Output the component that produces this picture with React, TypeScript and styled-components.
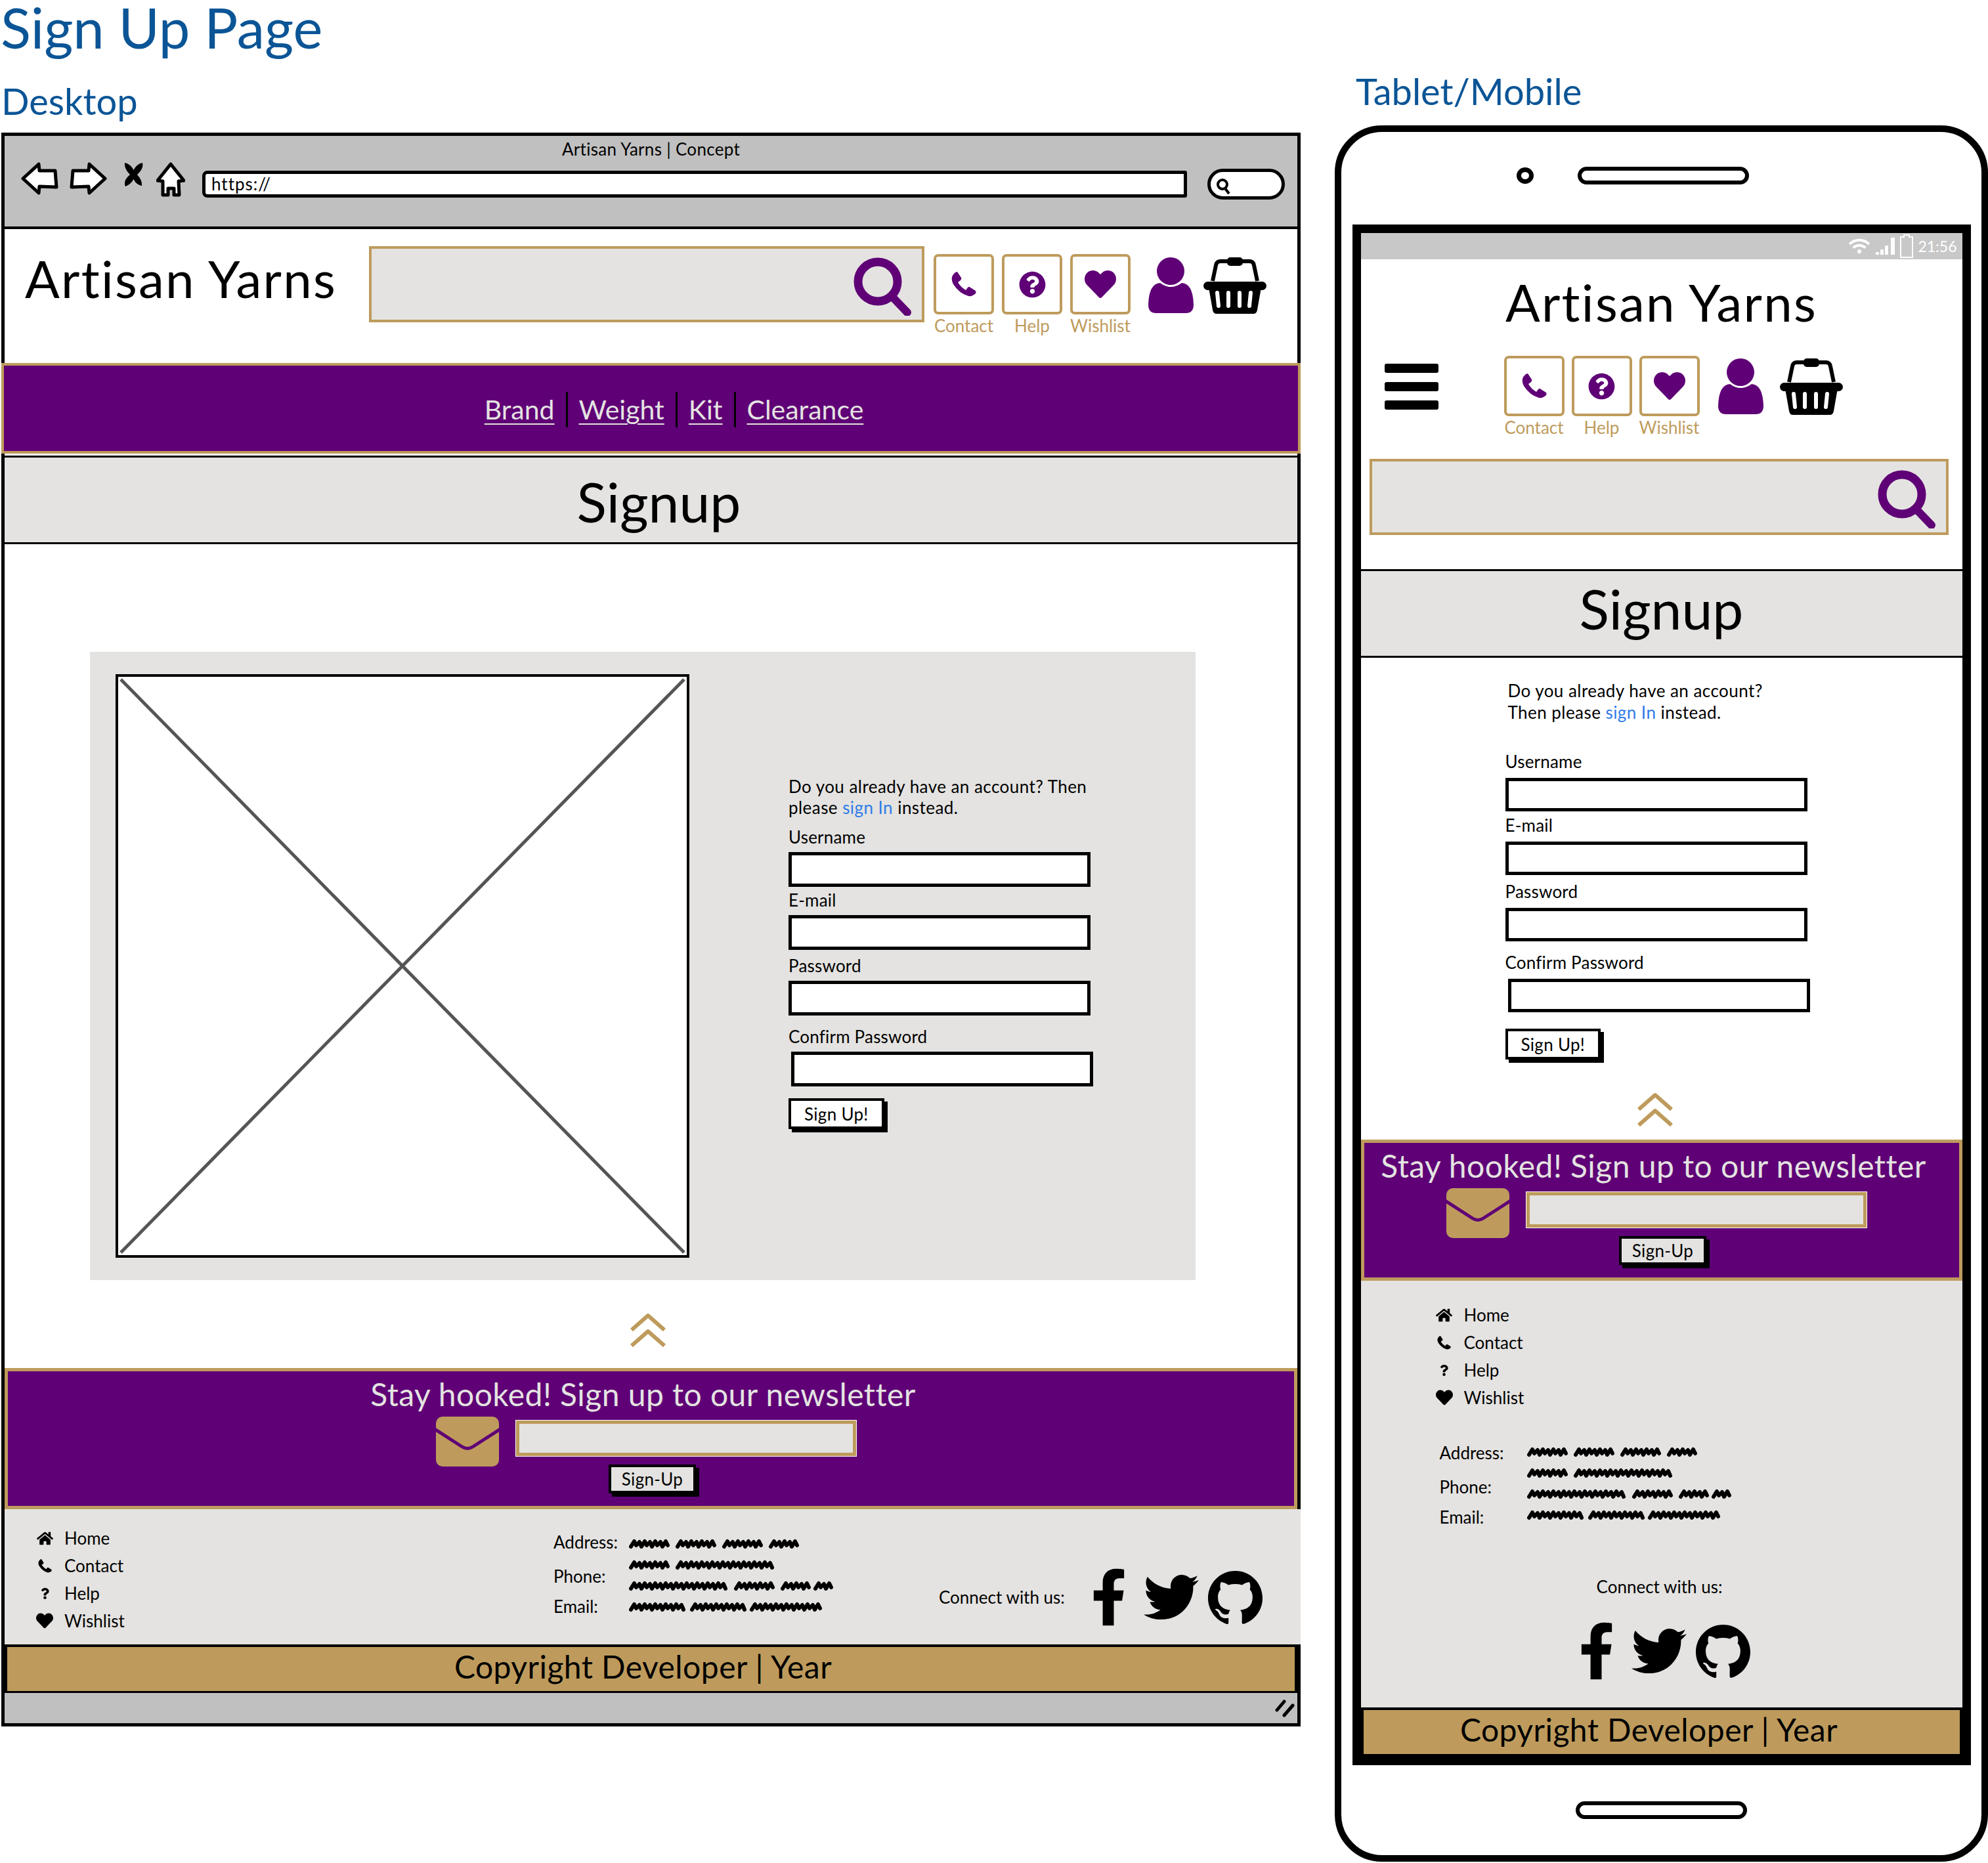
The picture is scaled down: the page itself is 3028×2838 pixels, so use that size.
import React from "react"
import styled, { createGlobalStyle } from "styled-components"
import { FaFacebookF, FaHeart, FaHome, FaQuestion, FaQuestionCircle, FaTwitter, FaWifi } from "react-icons/fa"
import { SiGithub } from "react-icons/si"

const Purple = "#5f0076"
const Tan = "#be9b5c"
const Paper = "#e4e3e1"
const Chrome = "#c0c0c0"
const Ink = "#000"
const Title = "#0b5596"

const GlobalStyle = createGlobalStyle`
  * { box-sizing: border-box; }
  html, body { margin: 0; padding: 0; background: #fff; }
  body { font-family: Lato, "Open Sans", sans-serif; color: ${Ink}; }
`

const Page = styled.div`
  width: 3028px;
  height: 2838px;
  display: flex;
  overflow: hidden;
`

const LeftColumn = styled.div`
  flex: 0 0 1985px;
`

const RightColumn = styled.div`
  flex: 0 0 995px;
  margin-left: 48px;
  padding-top: 107px;
`

const PageTitle = styled.h1`
  margin: 0;
  height: 122px;
  padding-left: 1px;
  font-size: 85px;
  font-weight: 400;
  line-height: 82px;
  color: ${Title};
`

const SectionTitle = styled.h2<{ $indent: number; $height: number }>`
  margin: 0;
  height: ${(p) => p.$height}px;
  padding-left: ${(p) => p.$indent}px;
  font-size: 56px;
  font-weight: 400;
  line-height: 64px;
  color: ${Title};
`

/* desktop browser frame */
const Browser = styled.div`
  margin-left: 2px;
  width: 1979px;
  height: 2428px;
  border: 5px solid ${Ink};
  display: flex;
  flex-direction: column;
`

const Toolbar = styled.div`
  flex: 0 0 142px;
  background: ${Chrome};
  border-bottom: 4px solid ${Ink};
`

const WindowTitle = styled.div`
  height: 40px;
  text-align: center;
  font-size: 26px;
  letter-spacing: 0.3px;
  line-height: 40px;
`

const ToolbarRow = styled.div`
  display: flex;
  align-items: flex-start;
  padding-left: 25px;
`

const NavGlyph = styled.svg<{ $gap: number }>`
  flex: none;
  margin-right: ${(p) => p.$gap}px;
`

const UrlBar = styled.div`
  width: 1500px;
  height: 41px;
  margin-top: 13px;
  padding-left: 9px;
  background: #fff;
  border: 5px solid ${Ink};
  border-radius: 8px 3px 3px 8px;
  font-size: 26px;
  letter-spacing: 1px;
  line-height: 31px;
`

const SearchPill = styled.div`
  width: 118px;
  height: 47px;
  margin: 10px 0 0 31px;
  padding: 9px 0 0 8px;
  background: #fff;
  border: 5px solid ${Ink};
  border-radius: 24px;
  display: flex;
`

const DesktopHeader = styled.div`
  flex: 0 0 204px;
  display: flex;
  align-items: flex-start;
  padding-top: 26px;
`

const Logo = styled.div`
  font-size: 78px;
  font-weight: 400;
  letter-spacing: 2.3px;
  line-height: 90px;
`

const DesktopLogo = styled(Logo)`
  flex: 0 0 555px;
  margin-top: 4px;
  padding-left: 31px;
`

const SearchBox = styled.div<{ $width: number }>`
  flex: none;
  width: ${(p) => p.$width}px;
  height: 116px;
  padding: 6px 16px 0 0;
  background: ${Paper};
  border: 4px solid ${Tan};
  display: flex;
  align-items: center;
  justify-content: flex-end;
`

const Shortcuts = styled.div<{ $gap: number }>`
  display: flex;
  align-items: flex-start;
  gap: ${(p) => p.$gap}px;
`

const DesktopShortcuts = styled(Shortcuts)`
  margin: 12px 0 0 14px;
`

const ShortcutItem = styled.div`
  width: 92px;
  display: flex;
  flex-direction: column;
  align-items: center;
`

const ShortcutBox = styled.div`
  width: 92px;
  height: 92px;
  background: #fff;
  border: 4px solid ${Tan};
  border-radius: 7px;
  display: flex;
  align-items: center;
  justify-content: center;
  color: ${Purple};
`

const ShortcutLabel = styled.div`
  margin-top: 1px;
  font-size: 26px;
  line-height: 32px;
  color: ${Tan};
`

const AccountIcons = styled.div<{ $left: number; $gap: number; $top: number }>`
  display: flex;
  align-items: flex-start;
  gap: ${(p) => p.$gap}px;
  margin-left: ${(p) => p.$left}px;
  margin-top: ${(p) => p.$top}px;
`

const NavBar = styled.div`
  flex: 0 0 138px;
  margin: 0 -5px 3px;
  padding: 4px 0 0 70px;
  background: ${Purple};
  border: 4px solid ${Tan};
  display: flex;
  align-items: center;
  justify-content: center;
`

const NavLink = styled.a`
  padding: 0 17px;
  font-size: 41px;
  line-height: 54px;
  color: ${Paper};
  text-decoration: underline;
  text-decoration-thickness: 2px;
  text-underline-offset: 6px;
  border-left: 3px solid ${Ink};

  &:first-child {
    border-left: 0;
  }
`

const PageHeading = styled.div<{ $mobile?: boolean }>`
  flex: 0 0 135px;
  min-height: 0;
  padding-left: ${(p) => (p.$mobile ? 0 : 24)}px;
  background: ${Paper};
  border-top: 3px solid ${Ink};
  border-bottom: 3px solid ${Ink};
  text-align: center;
  font-size: 84px;
  line-height: ${(p) => (p.$mobile ? 114 : 134)}px;
`

const DesktopContent = styled.div`
  flex: 0 0 1255px;
  display: flex;
  flex-direction: column;
  align-items: flex-start;
  padding-top: 164px;
`

const Panel = styled.div`
  margin-left: 130px;
  width: 1684px;
  height: 957px;
  padding: 34px 0 0 39px;
  background: ${Paper};
  display: flex;
  align-items: flex-start;
`

const Placeholder = styled.svg`
  flex: none;
  background: #fff;
  border: 4px solid ${Ink};
`

const Form = styled.form<{ $mobile?: boolean }>`
  width: 480px;
  display: flex;
  flex-direction: column;
  align-items: flex-start;
  margin: ${(p) => (p.$mobile ? "34px 0 0 220px" : "155px 0 0 151px")};
`

const Intro = styled.p<{ $mobile?: boolean }>`
  margin: 0;
  padding-left: ${(p) => (p.$mobile ? 4 : 0)}px;
  font-size: 26px;
  letter-spacing: 0.45px;
  line-height: ${(p) => (p.$mobile ? 33 : 32)}px;
  white-space: nowrap;
`

const SignInLink = styled.a`
  color: #2f7be8;
`

const Field = styled.label<{ $top: number; $inset?: number; $mobile?: boolean }>`
  display: block;
  margin-top: ${(p) => p.$top}px;
  font-size: 26px;
  letter-spacing: 0.2px;
  line-height: 32px;

  input {
    display: block;
    width: 460px;
    height: ${(p) => (p.$mobile ? 51 : 53)}px;
    margin: ${(p) => (p.$mobile ? 9 : 7)}px 0 0 ${(p) => p.$inset ?? 0}px;
    background: #fff;
    border: 5px solid ${Ink};
    outline: 0;
  }
`

const SketchButton = styled.button`
  height: 47px;
  padding: 0 20px;
  background: #fff;
  border: 4px solid ${Ink};
  box-shadow: 5px 5px 0 ${Ink};
  font-family: inherit;
  font-size: 26px;
  letter-spacing: 0.3px;
  line-height: 36px;
  color: ${Ink};
`

const SubmitButton = styled(SketchButton)<{ $top: number }>`
  margin-top: ${(p) => p.$top}px;
`

const BackToTop = styled.svg<{ $top: number; $left: number }>`
  flex: none;
  margin: ${(p) => p.$top}px 0 0 ${(p) => p.$left}px;
`

const Newsletter = styled.div`
  flex: 0 0 215px;
  background: ${Purple};
  border: 5px solid ${Tan};
  padding-top: 8px;
  display: flex;
  flex-direction: column;
  align-items: center;
`

const NewsletterTitle = styled.div`
  padding-right: 24px;
  font-size: 48px;
  letter-spacing: 0.45px;
  line-height: 54px;
  color: ${Paper};
`

const NewsletterRow = styled.div`
  margin-top: 7px;
  padding-right: 15px;
  display: flex;
  align-items: flex-start;
  gap: 26px;
`

const NewsletterInput = styled.input`
  width: 518px;
  height: 54px;
  margin-top: 6px;
  background: ${Paper};
  border: 5px solid ${Tan};
  box-shadow: 0 0 0 1px #fff;
  outline: 0;
`

const NewsletterButton = styled(SketchButton)`
  height: 44px;
  margin: -3px 0 0 4px;
  padding: 0 16px;
  background: ${Paper};
  line-height: 32px;
`

const FooterBar = styled.div<{ $stacked?: boolean }>`
  background: ${Paper};
  ${(p) =>
    p.$stacked
      ? `
    flex: 0 0 650px;
    display: flex;
    flex-direction: column;
    align-items: flex-start;
    padding: 31px 0 0 114px;
  `
      : `
    flex: 0 0 206px;
    margin-right: -5px;
    display: grid;
    grid-template-columns: 836px 587px 1fr;
  `}
`

const FooterLinks = styled.ul<{ $stacked?: boolean }>`
  list-style: none;
  margin: 0;
  padding: ${(p) => (p.$stacked ? 0 : "23px 0 0 48px")};
`

const FooterLink = styled.li`
  height: 42px;
  display: flex;
  align-items: center;
  font-size: 26px;
`

const LinkIcon = styled.span`
  flex: 0 0 43px;
  padding-right: 17px;
  display: flex;
  justify-content: center;
`

const Address = styled.div<{ $stacked?: boolean }>`
  display: flex;
  align-items: flex-start;
  padding: ${(p) => (p.$stacked ? "0 0 0 6px" : "36px 0 0 0")};
  margin-top: ${(p) => (p.$stacked ? 45 : 0)}px;
`

const AddressLabels = styled.div<{ $stacked?: boolean }>`
  flex: 0 0 ${(p) => (p.$stacked ? 133 : 115)}px;
  margin-top: ${(p) => (p.$stacked ? 2 : -2)}px;
`

const AddressLabel = styled.div<{ $top: number }>`
  margin-top: ${(p) => p.$top}px;
  font-size: 26px;
  line-height: 32px;
`

const AddressLines = styled.div`
  display: flex;
  flex-direction: column;
`

const ScribbleLine = styled.svg`
  display: block;
`

const Connect = styled.div<{ $stacked?: boolean }>`
  display: flex;
  font-size: 26px;
  ${(p) =>
    p.$stacked
      ? `
    flex-direction: column;
    align-items: center;
    gap: 38px;
    align-self: center;
    margin: 74px 0 0 -114px;
  `
      : `
    align-items: center;
    gap: 40px;
    padding-top: 90px;
    align-self: start;
  `}
`

const ConnectLabel = styled.span<{ $stacked?: boolean }>`
  padding-right: ${(p) => (p.$stacked ? 6 : 0)}px;
`

const SocialIcons = styled.div<{ $stacked?: boolean }>`
  display: flex;
  align-items: center;
  margin-left: ${(p) => (p.$stacked ? 10 : 0)}px;
`

const FacebookIcon = styled(FaFacebookF)`
  width: 54px;
  height: 88px;
  margin-right: 26px;
`

const TwitterIcon = styled(FaTwitter)`
  width: 84px;
  height: 84px;
  margin-right: 14px;
`

const GithubIcon = styled(SiGithub)`
  width: 83px;
  height: 83px;
`

const CopyrightBar = styled.div<{ $shift: number }>`
  flex: 0 0 75px;
  background: ${Tan};
  border: 4px solid ${Ink};
  padding-right: ${(p) => p.$shift}px;
  text-align: center;
  font-size: 48px;
  letter-spacing: 0.45px;
  line-height: 59px;
`

const StatusStrip = styled.div`
  flex: 1;
  margin-top: -1px;
  padding-right: 4px;
  background: ${Chrome};
  display: flex;
  align-items: center;
  justify-content: flex-end;
`

/* phone frame */
const Phone = styled.div`
  width: 995px;
  height: 2645px;
  border: 10px solid ${Ink};
  border-radius: 72px;
  display: flex;
  flex-direction: column;
  align-items: center;
`

const PhoneTop = styled.div`
  flex: 0 0 141px;
  padding: 0 88px 8px 0;
  display: flex;
  align-items: center;
  gap: 67px;
`

const Camera = styled.div`
  width: 26px;
  height: 25px;
  border: 7px solid ${Ink};
  border-radius: 50%;
`

const Speaker = styled.div`
  width: 261px;
  height: 27px;
  border: 6px solid ${Ink};
  border-radius: 14px;
`

const Screen = styled.div`
  flex: 0 0 2347px;
  width: 942px;
  border: 13px solid ${Ink};
  display: flex;
  flex-direction: column;
`

const PhoneStatus = styled.div`
  flex: 0 0 40px;
  padding-right: 8px;
  background: #c8c8c8;
  display: flex;
  align-items: center;
  justify-content: flex-end;
  gap: 7px;
  font-size: 23px;
  color: #fff;
`

const MobileHeader = styled.div`
  flex: 0 0 472px;
  display: flex;
  flex-direction: column;
`

const MobileLogo = styled(Logo)`
  margin-top: 20px;
  text-align: center;
`

const MobileTools = styled.div`
  margin-top: 37px;
  height: 118px;
  padding-left: 36px;
  display: flex;
  align-items: flex-start;
`

const Burger = styled.div`
  flex: 0 0 82px;
  margin: 12px 100px 0 0;
  display: flex;
  flex-direction: column;
  gap: 14px;
`

const BurgerBar = styled.span`
  height: 14px;
  background: ${Ink};
  border-radius: 3px;
`

const MobileSearch = styled(SearchBox)`
  margin: 39px 0 0 13px;
`

const MobileContent = styled.div`
  flex: 1;
  display: flex;
  flex-direction: column;
  align-items: flex-start;
`

const HomeKey = styled.div`
  flex: 1;
  display: flex;
  align-items: center;
`

const BackGlyph = ({ flip, gap }: { flip?: boolean; gap: number }) => (
  <NavGlyph $gap={gap} width="57" height="50" viewBox="0 0 57 50">
    <path
      transform={flip ? "translate(57 0) scale(-1 1)" : undefined}
      d="M3 25 L27 3 L28 13 H52 L54 38 L28 37 L27 47 Z"
      fill="#fff"
      stroke={Ink}
      strokeWidth="5"
      strokeLinejoin="round"
    />
  </NavGlyph>
)

const BrowserNav = () => (
  <>
    <BackGlyph gap={17} />
    <BackGlyph flip gap={24} />
    <NavGlyph $gap={18} width="33" height="38" viewBox="0 0 33 38">
      <path
        d="M3 1 Q12 3 16.5 12 Q21 3 30 1 Q32 10 22 19 Q30 28 29 36 Q20 34 16.5 26 Q12 34 4 37 Q0 28 11 19 Q2 10 3 1Z"
        fill={Ink}
      />
    </NavGlyph>
    <NavGlyph $gap={26} width="44" height="54" viewBox="0 0 44 54">
      <path
        d="M22 3 L42 28 L34 29 L35 50 L27 50 L27 40 L18 40 L18 50 L10 50 L10 29 L2 28 Z"
        fill="#fff"
        stroke={Ink}
        strokeWidth="5"
        strokeLinejoin="round"
      />
    </NavGlyph>
  </>
)

const MagnifierIcon = () => (
  <svg width="88" height="90" viewBox="0 0 88 90">
    <circle cx="37" cy="38" r="30" fill="none" stroke={Purple} strokeWidth="13" />
    <path d="M58 60 L82 85" stroke={Purple} strokeWidth="12" strokeLinecap="round" />
  </svg>
)

const PhoneGlyph = ({ size, color }: { size: number; color: string }) => (
  <svg width={size} height={size} viewBox="0 0 38 38">
    <path
      d="M9 0 L15 9 Q16 11 14 13 L10 16 Q14 23 22 28 L25 24 Q27 22 29 24 L37 29 Q38 31 37 33 Q32 38 26 37 Q12 33 3 19 Q-2 9 4 3 Q6 0 9 0Z"
      fill={color}
    />
  </svg>
)

const PersonIcon = () => (
  <svg width="69" height="85" viewBox="0 0 69 85">
    <circle cx="34" cy="21" r="21" fill={Purple} />
    <path d="M18 39 Q34 51 51 39 Q68 40 69 72 Q69 85 57 85 H12 Q0 85 0 72 Q1 40 18 39Z" fill={Purple} />
  </svg>
)

const BasketIcon = () => (
  <svg width="96" height="86" viewBox="0 0 96 86">
    <path d="M14 36 L19 12 Q20 6 26 6 H70 Q76 6 77 12 L82 36" fill="none" stroke={Ink} strokeWidth="6" />
    <rect x="36" y="0" width="24" height="13" rx="5" fill={Ink} />
    <rect x="0" y="37" width="96" height="13" rx="6.5" fill={Ink} />
    <path d="M8 46 H88 L82 80 Q81 86 76 86 H20 Q15 86 14 80Z" fill={Ink} />
    <path d="M21 54 L23 74 M38 54 V74 M55 54 V74 M72 54 L70 74" stroke="#fff" strokeWidth="6" strokeLinecap="round" />
  </svg>
)

const EnvelopeIcon = () => (
  <svg width="96" height="76" viewBox="0 0 96 76">
    <rect width="96" height="76" rx="10" fill={Tan} />
    <path d="M-2 19 L40 46 Q48 51 56 46 L98 19" fill="none" stroke={Purple} strokeWidth="5" />
  </svg>
)

const ChevronsIcon = ({ top, left }: { top: number; left: number }) => (
  <BackToTop $top={top} $left={left} width="56" height="53" viewBox="0 0 56 53">
    <path d="M3 26 L28 4 L53 26 M3 50 L28 28 L53 50" fill="none" stroke={Tan} strokeWidth="6" strokeLinejoin="round" />
  </BackToTop>
)

const ShortcutGroup = () => (
  <>
    <ShortcutItem>
      <ShortcutBox>
        <PhoneGlyph size={38} color={Purple} />
      </ShortcutBox>
      <ShortcutLabel>Contact</ShortcutLabel>
    </ShortcutItem>
    <ShortcutItem>
      <ShortcutBox>
        <FaQuestionCircle size={41} />
      </ShortcutBox>
      <ShortcutLabel>Help</ShortcutLabel>
    </ShortcutItem>
    <ShortcutItem>
      <ShortcutBox>
        <FaHeart size={48} />
      </ShortcutBox>
      <ShortcutLabel>Wishlist</ShortcutLabel>
    </ShortcutItem>
  </>
)

const SignupForm = ({ mobile }: { mobile?: boolean }) => {
  const gaps = mobile ? [42, 5, 9, 16] : [13, 4, 8, 16]
  return (
    <Form $mobile={mobile}>
      <Intro $mobile={mobile}>
        {mobile ? "Do you already have an account?" : "Do you already have an account? Then"}
        <br />
        {mobile ? "Then please " : "please "}
        <SignInLink>sign In</SignInLink> instead.
      </Intro>
      <Field $top={gaps[0]} $mobile={mobile}>
        Username
        <input />
      </Field>
      <Field $top={gaps[1]} $mobile={mobile}>
        E-mail
        <input />
      </Field>
      <Field $top={gaps[2]} $mobile={mobile}>
        Password
        <input />
      </Field>
      <Field $top={gaps[3]} $inset={4} $mobile={mobile}>
        Confirm Password
        <input />
      </Field>
      <SubmitButton type="button" $top={mobile ? 25 : 18}>
        Sign Up!
      </SubmitButton>
    </Form>
  )
}

const NewsletterSection = () => (
  <Newsletter>
    <NewsletterTitle>Stay hooked! Sign up to our newsletter</NewsletterTitle>
    <NewsletterRow>
      <EnvelopeIcon />
      <NewsletterInput />
    </NewsletterRow>
    <NewsletterButton type="button">Sign-Up</NewsletterButton>
  </Newsletter>
)

const footerLinks = [
  { label: "Home", icon: <FaHome size={25} /> },
  { label: "Contact", icon: <PhoneGlyph size={21} color={Ink} /> },
  { label: "Help", icon: <FaQuestion size={17} /> },
  { label: "Wishlist", icon: <FaHeart size={26} /> },
]

const scribbles = [
  [63, 63, 63, 42],
  [63, 150],
  [152, 63, 42, 28],
  [85, 83, 112],
]

// hand-scrawled placeholder words
const scribblePath = (words: number[]) => {
  let x = 3
  let d = ""
  words.forEach((w) => {
    d += `M${x} 21`
    for (let i = 0; i < w - 8; i += 8) {
      d += i % 16 === 0 ? " l5 -8 l3 6" : " l5 -5 l3 7"
    }
    x += w + 8
  })
  return d
}

const ScribbleText = () => (
  <AddressLines>
    {scribbles.map((words, i) => (
      <ScribbleLine key={i} width="400" height="32" viewBox="0 0 400 32">
        <path d={scribblePath(words)} fill="none" stroke={Ink} strokeWidth="6" strokeLinejoin="round" strokeLinecap="round" />
      </ScribbleLine>
    ))}
  </AddressLines>
)

const FooterContent = ({ stacked }: { stacked?: boolean }) => (
  <FooterBar $stacked={stacked}>
    <FooterLinks $stacked={stacked}>
      {footerLinks.map((l) => (
        <FooterLink key={l.label}>
          <LinkIcon>{l.icon}</LinkIcon>
          {l.label}
        </FooterLink>
      ))}
    </FooterLinks>
    <Address $stacked={stacked}>
      <AddressLabels $stacked={stacked}>
        <AddressLabel $top={0}>Address:</AddressLabel>
        <AddressLabel $top={20}>Phone:</AddressLabel>
        <AddressLabel $top={14}>Email:</AddressLabel>
      </AddressLabels>
      <ScribbleText />
    </Address>
    <Connect $stacked={stacked}>
      <ConnectLabel $stacked={stacked}>Connect with us:</ConnectLabel>
      <SocialIcons $stacked={stacked}>
        <FacebookIcon />
        <TwitterIcon />
        <GithubIcon />
      </SocialIcons>
    </Connect>
  </FooterBar>
)

const App: React.FC = () => (
  <Page>
    <GlobalStyle />
    <LeftColumn>
      <PageTitle>Sign Up Page</PageTitle>
      <SectionTitle $indent={2} $height={80}>
        Desktop
      </SectionTitle>
      <Browser>
        <Toolbar>
          <WindowTitle>Artisan Yarns | Concept</WindowTitle>
          <ToolbarRow>
            <BrowserNav />
            <UrlBar>https://</UrlBar>
            <SearchPill>
              <svg width="24" height="26" viewBox="0 0 24 26">
                <circle cx="10" cy="10" r="7" fill="none" stroke={Ink} strokeWidth="4" />
                <path d="M14 16 L20 24" stroke={Ink} strokeWidth="4" />
              </svg>
            </SearchPill>
          </ToolbarRow>
        </Toolbar>
        <DesktopHeader>
          <DesktopLogo>Artisan Yarns</DesktopLogo>
          <SearchBox $width={846}>
            <MagnifierIcon />
          </SearchBox>
          <DesktopShortcuts $gap={12}>
            <ShortcutGroup />
          </DesktopShortcuts>
          <AccountIcons $left={27} $gap={15} $top={17}>
            <PersonIcon />
            <BasketIcon />
          </AccountIcons>
        </DesktopHeader>
        <NavBar>
          <NavLink>Brand</NavLink>
          <NavLink>Weight</NavLink>
          <NavLink>Kit</NavLink>
          <NavLink>Clearance</NavLink>
        </NavBar>
        <PageHeading>Signup</PageHeading>
        <DesktopContent>
          <Panel>
            <Placeholder width="874" height="889" viewBox="0 0 866 881">
              <path d="M4 4 L862 877 M862 4 L4 877" stroke="#555" strokeWidth="5" />
            </Placeholder>
            <SignupForm />
          </Panel>
          <ChevronsIcon top={50} left={952} />
        </DesktopContent>
        <NewsletterSection />
        <FooterContent />
        <CopyrightBar $shift={24}>Copyright Developer | Year</CopyrightBar>
        <StatusStrip>
          <svg width="30" height="28" viewBox="0 0 30 28">
            <path d="M3 17 L14 4 M14 25 L27 10" stroke={Ink} strokeWidth="5" strokeLinecap="round" />
          </svg>
        </StatusStrip>
      </Browser>
    </LeftColumn>
    <RightColumn>
      <SectionTitle $indent={32} $height={84}>
        Tablet/Mobile
      </SectionTitle>
      <Phone>
        <PhoneTop>
          <Camera />
          <Speaker />
        </PhoneTop>
        <Screen>
          <PhoneStatus>
            <FaWifi size={32} />
            <svg width="32" height="30" viewBox="0 0 32 30">
              <path d="M2 24h5v4H2z M9 20h5v8H9z M16 14h5v14h-5z M25 2h6v26h-6z" fill="#fff" />
            </svg>
            <svg width="20" height="36" viewBox="0 0 20 36">
              <path d="M6 1h8v3h5v31H1V4h5z" fill="none" stroke="#fff" strokeWidth="2" />
            </svg>
            21:56
          </PhoneStatus>
          <MobileHeader>
            <MobileLogo>Artisan Yarns</MobileLogo>
            <MobileTools>
              <Burger>
                <BurgerBar />
                <BurgerBar />
                <BurgerBar />
              </Burger>
              <Shortcuts $gap={11}>
                <ShortcutGroup />
              </Shortcuts>
              <AccountIcons $left={28} $gap={25} $top={4}>
                <PersonIcon />
                <BasketIcon />
              </AccountIcons>
            </MobileTools>
            <MobileSearch $width={882}>
              <MagnifierIcon />
            </MobileSearch>
          </MobileHeader>
          <PageHeading $mobile>Signup</PageHeading>
          <MobileContent>
            <SignupForm mobile />
            <ChevronsIcon top={50} left={420} />
          </MobileContent>
          <NewsletterSection />
          <FooterContent stacked />
          <CopyrightBar $shift={38}>Copyright Developer | Year</CopyrightBar>
        </Screen>
        <HomeKey>
          <Speaker />
        </HomeKey>
      </Phone>
    </RightColumn>
  </Page>
)

export default App
